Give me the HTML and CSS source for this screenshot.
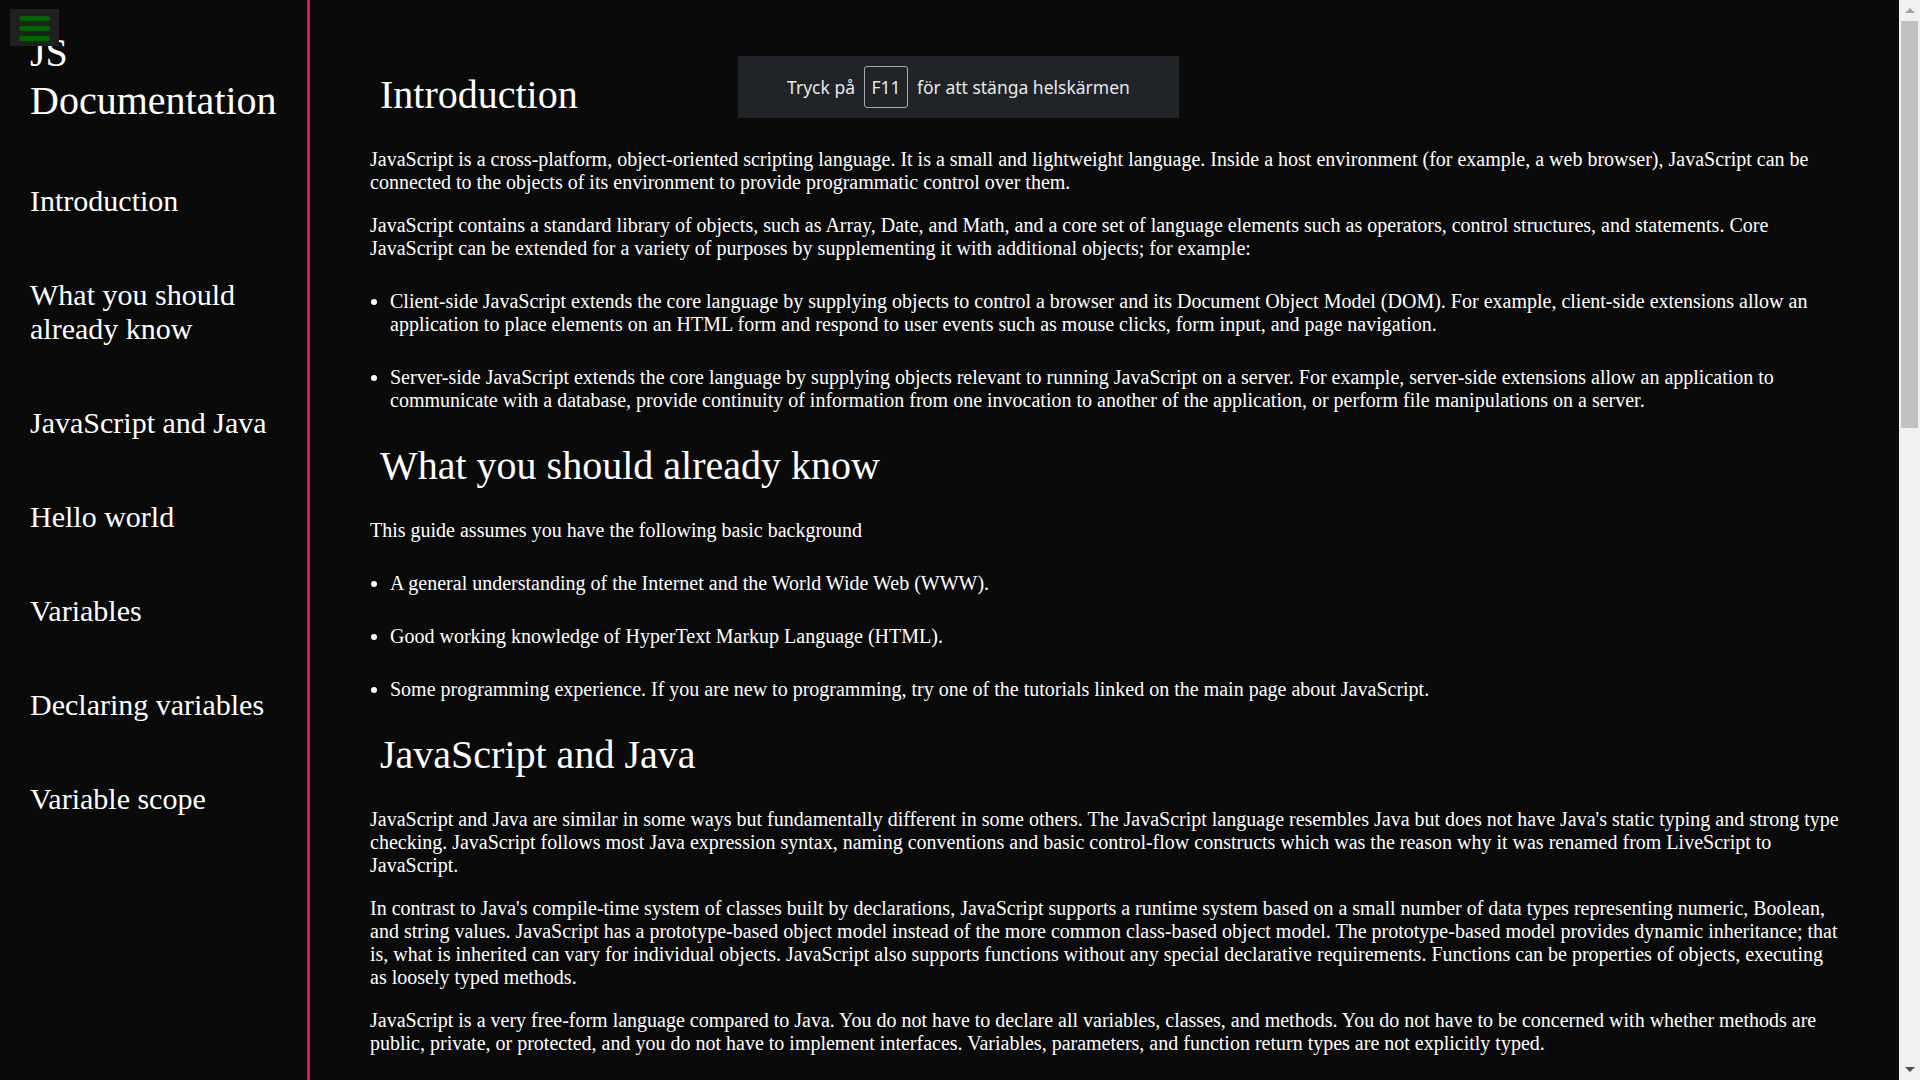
FILE: index.html
```html
<!DOCTYPE html>
<html lang="en">
<head>
<meta charset="utf-8">
<title>JS Documentation</title>
<link rel="stylesheet" href="styles.css">
</head>
<body>
<button class="menu-btn" aria-label="Menu"><span class="bar"></span><span class="bar"></span><span class="bar"></span></button>
<nav class="sidebar" id="navbar">
  <header class="sidebar-title">JS Documentation</header>
  <ul class="nav-list">
    <li><a class="nav-link" href="#Introduction">Introduction</a></li>
    <li><a class="nav-link" href="#What_you_should_already_know">What you should already know</a></li>
    <li><a class="nav-link" href="#JavaScript_and_Java">JavaScript and Java</a></li>
    <li><a class="nav-link" href="#Hello_world">Hello world</a></li>
    <li><a class="nav-link" href="#Variables">Variables</a></li>
    <li><a class="nav-link" href="#Declaring_variables">Declaring variables</a></li>
    <li><a class="nav-link" href="#Variable_scope">Variable scope</a></li>
  </ul>
</nav>
<main class="main" id="main-doc">
  <section class="main-section" id="Introduction">
    <header class="section-title">Introduction</header>
    <p>JavaScript is a cross-platform, object-oriented scripting language. It is a small and lightweight language. Inside a host environment (for example, a web browser), JavaScript can be connected to the objects of its environment to provide programmatic control over them.</p>
    <p>JavaScript contains a standard library of objects, such as Array, Date, and Math, and a core set of language elements such as operators, control structures, and statements. Core JavaScript can be extended for a variety of purposes by supplementing it with additional objects; for example:</p>
    <ul>
      <li>Client-side JavaScript extends the core language by supplying objects to control a browser and its Document Object Model (DOM). For example, client-side extensions allow an application to place elements on an HTML form and respond to user events such as mouse clicks, form input, and page navigation.</li>
      <li>Server-side JavaScript extends the core language by supplying objects relevant to running JavaScript on a server. For example, server-side extensions allow an application to communicate with a database, provide continuity of information from one invocation to another of the application, or perform file manipulations on a server.</li>
    </ul>
  </section>
  <section class="main-section" id="What_you_should_already_know">
    <header class="section-title">What you should already know</header>
    <p>This guide assumes you have the following basic background</p>
    <ul>
      <li>A general understanding of the Internet and the World Wide Web (WWW).</li>
      <li>Good working knowledge of HyperText Markup Language (HTML).</li>
      <li>Some programming experience. If you are new to programming, try one of the tutorials linked on the main page about JavaScript.</li>
    </ul>
  </section>
  <section class="main-section" id="JavaScript_and_Java">
    <header class="section-title">JavaScript and Java</header>
    <p>JavaScript and Java are similar in some ways but fundamentally different in some others. The JavaScript language resembles Java but does not have Java's static typing and strong type checking. JavaScript follows most Java expression syntax, naming conventions and basic control-flow constructs which was the reason why it was renamed from LiveScript to JavaScript.</p>
    <p>In contrast to Java's compile-time system of classes built by declarations, JavaScript supports a runtime system based on a small number of data types representing numeric, Boolean, and string values. JavaScript has a prototype-based object model instead of the more common class-based object model. The prototype-based model provides dynamic inheritance; that is, what is inherited can vary for individual objects. JavaScript also supports functions without any special declarative requirements. Functions can be properties of objects, executing as loosely typed methods.</p>
    <p>JavaScript is a very free-form language compared to Java. You do not have to declare all variables, classes, and methods. You do not have to be concerned with whether methods are public, private, or protected, and you do not have to implement interfaces. Variables, parameters, and function return types are not explicitly typed.</p>
  </section>
</main>
<div class="scrollbar" aria-hidden="true">
  <div class="sb-btn"><span class="arrow-up"></span></div>
  <div class="sb-thumb"></div>
  <div class="sb-track"></div>
  <div class="sb-btn"><span class="arrow-down"></span></div>
</div>
<div class="fs-toast">
  <span>Tryck på</span>
  <span class="kbd">F11</span>
  <span>för att stänga helskärmen</span>
</div>
</body>
</html>
```
FILE: styles.css
```css
html, body {
  margin: 0;
  height: 100%;
  overflow: hidden;
  background: #0a0a0a;
}

body {
  display: flex;
  font-family: "Liberation Serif", "Times New Roman", serif;
  color: #ffffff;
}

.menu-btn {
  position: fixed;
  left: 10px;
  top: 9px;
  width: 49px;
  height: 37px;
  padding: 7px 0 0 0;
  border: none;
  background: #202020;
  display: flex;
  flex-direction: column;
  align-items: center;
  justify-content: flex-start;
  gap: 5px;
  box-sizing: border-box;
}

.menu-btn .bar {
  display: block;
  width: 31px;
  height: 5px;
  border-radius: 3px;
  background: #006400;
}

.sidebar {
  width: 310px;
  flex: none;
  box-sizing: border-box;
  border-right: 3px solid #e8135f;
  padding: 29px 0 0 30px;
}

.sidebar-title {
  font-size: 40px;
  line-height: 48px;
  margin: 0 0 59px 0;
}

.nav-list {
  list-style: none;
  margin: 0;
  padding: 0;
  display: flex;
  flex-direction: column;
  gap: 60px;
}

.nav-link {
  display: block;
  color: #ffffff;
  text-decoration: none;
  font-size: 30px;
  line-height: normal;
}

.main {
  flex: 1;
  min-width: 0;
  overflow: hidden;
  padding: 41px 57px 0 60px;
  font-size: 20px;
  line-height: normal;
}

.section-title {
  display: block;
  font-size: 40px;
  line-height: normal;
  margin: 30px 0 30px 10px;
}

.main p {
  margin: 20px 0;
}

.main ul {
  margin: 20px 0;
  padding-left: 20px;
}

.main li {
  margin: 30px 0;
}

.scrollbar {
  width: 21px;
  flex: none;
  background: #f1f1f1;
  display: flex;
  flex-direction: column;
}

.sb-btn {
  height: 21px;
  flex: none;
  display: flex;
  align-items: center;
  justify-content: center;
}

.sb-thumb {
  height: 407px;
  flex: none;
  margin: 0 2px;
  background: #c1c1c1;
}

.sb-track {
  flex: 1;
}

.arrow-up {
  width: 0;
  height: 0;
  border-left: 5px solid transparent;
  border-right: 5px solid transparent;
  border-bottom: 5px solid #a3a3a3;
}

.arrow-down {
  width: 0;
  height: 0;
  border-left: 5px solid transparent;
  border-right: 5px solid transparent;
  border-top: 5px solid #505050;
}

.fs-toast {
  position: fixed;
  left: 738px;
  top: 56px;
  width: 441px;
  height: 62px;
  background: #202327;
  color: #e8e8e8;
  font-family: "Noto Sans", "Open Sans", sans-serif;
  font-size: 17.5px;
  display: flex;
  align-items: center;
  justify-content: center;
  gap: 9px;
}

.kbd {
  width: 44px;
  height: 42px;
  box-sizing: border-box;
  border: 1px solid #a8a8a8;
  border-radius: 3px;
  display: flex;
  align-items: center;
  justify-content: center;
}
```
